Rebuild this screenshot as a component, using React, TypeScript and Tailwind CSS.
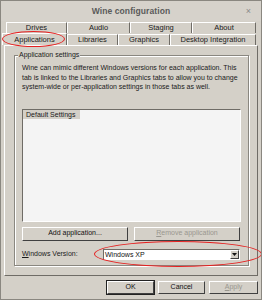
import React from 'react';

const font = { fontFamily: '"Liberation Sans", Arial, sans-serif' };

function Tab({ label, w, selected }: { label: string; w: string; selected?: boolean }) {
  return (
    <div
      className={`${w} flex items-center justify-center border-t border-l border-r border-t-white border-l-white border-r-[#6f6c66] text-[7.5px] text-[#1a1a1a] bg-[#d4d0c8] ${
        selected ? 'h-[12px]' : 'h-[11px]'
      }`}
    >
      {label}
    </div>
  );
}

function Button({ children, className, disabled }: { children: React.ReactNode; className: string; disabled?: boolean }) {
  return (
    <div
      className={`${className} flex items-center justify-center border border-t-white border-l-white border-b-[#404040] border-r-[#404040] bg-[#d4d0c8] text-[7px] ${
        disabled ? 'text-[#9a978f]' : 'text-[#111]'
      }`}
    >
      {children}
    </div>
  );
}

export default function App() {
  return (
    <div style={font} className="relative w-[262px] h-[300px] bg-[#d4d0c8] overflow-hidden flex flex-col border border-[#8a8780]">
      {/* title bar */}
      <div className="h-[20px] flex items-center justify-center relative bg-[#d6d2cb]">
        <span className="text-[8.5px] font-bold text-[#5a5a5a] tracking-[0.1px]">Wine configuration</span>
        <span className="absolute right-[10px] top-[4px] text-[9px] text-[#8a8a8a]">×</span>
      </div>

      {/* tabs */}
      <div className="mt-[1px] flex pl-[5px]">
        <Tab label="Drives" w="w-[61px]" />
        <Tab label="Audio" w="w-[63px]" />
        <Tab label="Staging" w="w-[62px]" />
        <Tab label="About" w="w-[64px]" />
      </div>
      <div className="flex pl-[1px] items-end">
        <Tab label="Applications" w="w-[65px]" selected />
        <Tab label="Libraries" w="w-[51px]" />
        <Tab label="Graphics" w="w-[52px]" />
        <Tab label="Desktop Integration" w="w-[86px]" />
      </div>

      {/* panel */}
      <div className="mx-[3px] h-[231px] border border-t-white border-l-white border-b-[#6f6c66] border-r-[#6f6c66] pt-[9px] pl-[9px] pr-[8px] pb-[9px]">
        <div className="relative h-full border border-[#8a8780] shadow-[inset_1px_1px_0_#fff,1px_1px_0_#fff] px-[7px] pt-[8px]">
          <span className="absolute left-[3px] top-[-6px] bg-[#d4d0c8] px-[1px] text-[7px] text-[#1a1a1a]">Application settings</span>
          <p className="text-[7px] leading-[9.5px] text-[#1a1a1a] mt-[-1px]">
            Wine can mimic different Windows versions for each application. This tab is linked to the Libraries and Graphics tabs to allow you to change system-wide or per-application settings in those tabs as well.
          </p>
          <div className="mt-[17px] h-[113px] bg-[#f4f4f4] border border-t-[#6f6c66] border-l-[#6f6c66] border-b-white border-r-white">
            <div className="w-[57px] h-[9px] bg-[#d4d0c8] text-[7px] leading-[9px] pl-[3px] text-[#1a1a1a]">Default Settings</div>
          </div>
          <div className="mt-[5px] flex gap-[6px]">
            <Button className="w-[106px] h-[14px]">Add application...</Button>
            <Button className="w-[106px] h-[14px]" disabled>
              <span className="underline">R</span>emove application
            </Button>
          </div>
          <div className="mt-[8px] flex items-center">
            <span className="w-[81px] text-[7px] text-[#1a1a1a]">
              <span className="underline">W</span>indows Version:
            </span>
            <div className="w-[137px] h-[11px] flex bg-white border border-t-[#6f6c66] border-l-[#6f6c66] border-b-white border-r-white">
              <span className="flex-1 text-[7px] leading-[9px] pl-[1px] text-[#111]">Windows XP</span>
              <div className="w-[9px] h-[9px] bg-[#d4d0c8] border border-t-white border-l-white border-b-[#404040] border-r-[#404040] flex items-center justify-center">
                <svg width="5" height="3" viewBox="0 0 5 3"><path d="M0 0h5L2.5 3z" fill="#111" /></svg>
              </div>
            </div>
          </div>
        </div>
      </div>

      {/* bottom buttons */}
      <div className="mt-[5px] flex pl-[106px] gap-[4px]">
        <Button className="w-[47px] h-[13px] outline outline-1 outline-[#222]">OK</Button>
        <Button className="w-[47px] h-[13px]">Cancel</Button>
        <Button className="w-[49px] h-[13px]" disabled>
          <span className="underline">A</span>pply
        </Button>
      </div>

      {/* red annotations */}
      <div className="absolute left-[1px] top-[30px] w-[63px] h-[16px] rounded-[50%] border border-[#e52020]" />
      <div className="absolute left-[93px] top-[240px] w-[168px] h-[26px] rounded-[50%] border border-[#e52020]" />
    </div>
  );
}
